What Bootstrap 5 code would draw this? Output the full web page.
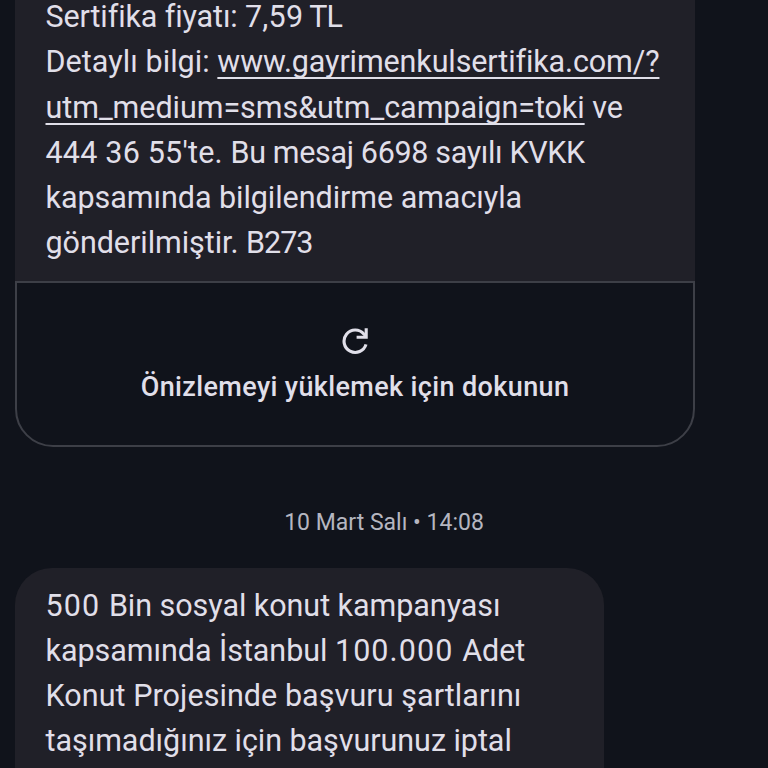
<!DOCTYPE html>
<html lang="tr">

<head>
    <meta charset="UTF-8">
    <meta name="viewport" content="width=device-width, initial-scale=1">
    <title>Mesajlar</title>
    <link href="https://cdn.jsdelivr.net/npm/bootstrap@5.3.3/dist/css/bootstrap.min.css" rel="stylesheet">
    <style>
        body {
            background: #10131b;
            color: #e0dfe9;
            font-family: Roboto, "Noto Sans", sans-serif;
        }

        .chat {
            height: 768px;
            padding: 0 15px;
        }

        .bubble {
            flex-shrink: 0;
            background: #202028;
            font-size: 30.5px;
            line-height: 45.3px;
            padding-left: 30.5px;
        }

        .bubble span {
            white-space: nowrap;
        }

        /* the conversation is scrolled, the first line sits against the top edge */
        .bubble-first {
            width: 680px;
            height: 287px;
            margin-top: -6px;
        }

        .bubble-second {
            width: 589px;
            height: 200px;
            padding-top: 14.5px;
            border-radius: 37px 37px 0 0;
        }

        .bubble a {
            color: inherit;
            text-decoration-thickness: 2px;
            text-underline-offset: 5px;
            text-decoration-skip-ink: none;
        }

        .preview {
            flex-shrink: 0;
            width: 680px;
            height: 166px;
            padding-top: 44px;
            border: 2px solid #3d3f47;
            border-radius: 0 0 38px 38px;
            font-size: 27px;
            font-weight: 500;
            line-height: 36px;
            letter-spacing: .37px;
        }

        .preview svg {
            margin-bottom: 14px;
        }

        .stamp {
            flex-shrink: 0;
            height: 121px;
            padding-top: 31px;
            font-size: 23px;
            color: #b5b6c0;
        }

        .ls-a { letter-spacing: -.12px; }
        .ls-b { letter-spacing: .06px; }
        .ls-c { letter-spacing: -.05px; }
        .ls-d { letter-spacing: -.35px; }
        .ls-e { letter-spacing: -1px; }
        .num { letter-spacing: .2px; }
        .num-wide { letter-spacing: 1.1px; }
    </style>
</head>

<body>
    <main class="chat d-flex flex-column overflow-hidden">
        <div class="bubble bubble-first d-flex flex-column align-items-start">
            <span class="ls-a">Sertifika fiyatı: <span class="num">7,59</span><span class="ls-e"> TL</span></span>
            <span class="ls-b">Detaylı bilgi: <a href="#" class="ls-a">www.gayrimenkulsertifika.com/?</a></span>
            <span class="ls-c"><a href="#">utm_medium=sms&amp;utm_campaign=toki</a> ve</span>
            <span class="ls-d"><span class="num">444 36 55'te. </span>Bu mesaj 6698 sayılı KVKK</span>
            <span class="ls-c">kapsamında bilgilendirme amacıyla</span>
            <span class="ls-c">gönderilmiştir. <span class="ls-e">B273</span></span>
        </div>

        <div class="preview d-flex flex-column align-items-center">
            <svg width="28" height="28" viewBox="0 0 28 28" fill="none" stroke="#e0dfe9" stroke-width="3.1">
                <path d="M25 17.4A11.2 11.2 0 1 1 22.8 7L25 9.2" />
                <path d="M25.2 1.2V10.2H15.6" />
            </svg>
            <span>Önizlemeyi yüklemek için dokunun</span>
        </div>

        <div class="stamp d-flex align-items-center justify-content-center">10 Mart Salı • 14:08</div>

        <div class="bubble bubble-second d-flex flex-column align-items-start">
            <span class="ls-c"><span class="num-wide">500 </span>Bin sosyal konut kampanyası</span>
            <span class="ls-c">kapsamında İstanbul <span class="num-wide">100.000 </span>Adet</span>
            <span class="ls-b">Konut Projesinde başvuru şartlarını</span>
            <span class="ls-c">taşımadığınız için başvurunuz iptal</span>
        </div>
    </main>

    <script src="https://cdn.jsdelivr.net/npm/bootstrap@5.3.3/dist/js/bootstrap.bundle.min.js"></script>
</body>

</html>
